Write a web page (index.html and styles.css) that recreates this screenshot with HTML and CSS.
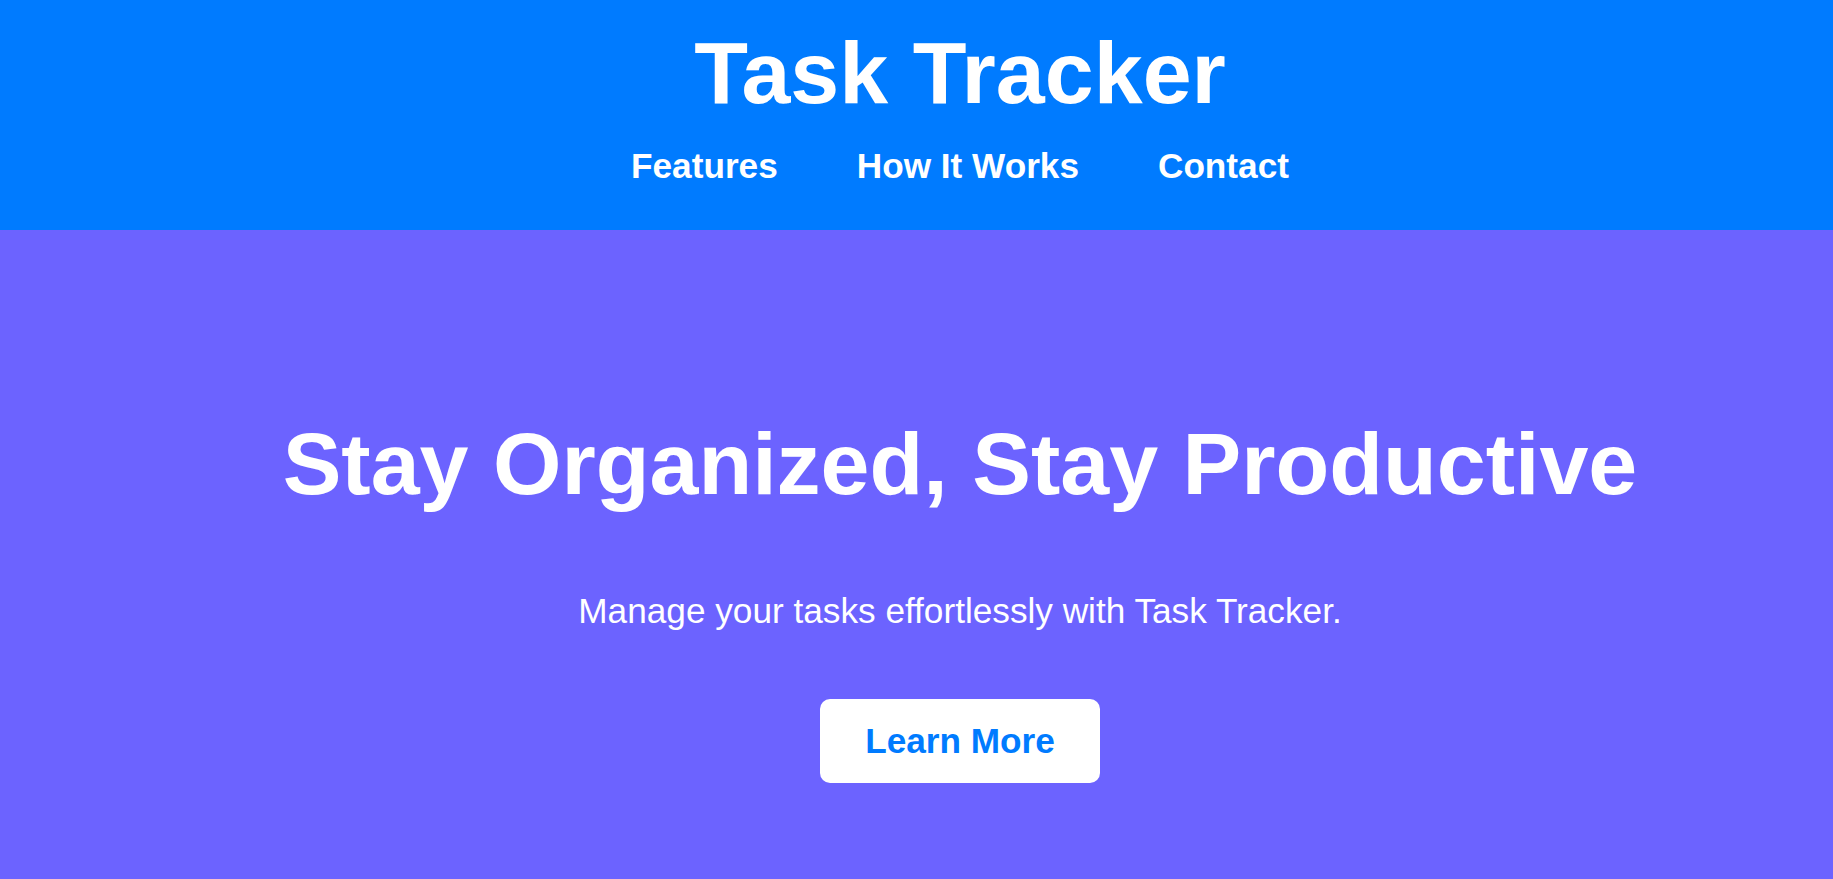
FILE: index.html
```html
<!DOCTYPE html>
<html lang="en">
<head>
<meta charset="utf-8">
<title>Task Tracker</title>
<link rel="stylesheet" href="styles.css">
</head>
<body>
<header class="site-header">
  <h1 class="brand">Task Tracker</h1>
  <nav class="nav">
    <a class="nav-link" href="#features">Features</a>
    <a class="nav-link" href="#how">How It Works</a>
    <a class="nav-link" href="#contact">Contact</a>
  </nav>
</header>
<section class="hero">
  <h2 class="hero-title">Stay Organized, Stay Productive</h2>
  <p class="hero-sub">Manage your tasks effortlessly with Task Tracker.</p>
  <a class="btn" href="#features">Learn More</a>
</section>
</body>
</html>
```

FILE: styles.css
```css
html, body {
  margin: 0;
  padding: 0;
  overflow: hidden;
}
body {
  font-family: "Liberation Sans", Arial, sans-serif;
  color: #fff;
  background: #6c63ff;
}
.site-header {
  background: #007bff;
  height: 230px;
  box-sizing: border-box;
  padding: 22px 0 0 87px;
  text-align: center;
}
.brand {
  margin: 0 0 22px;
  font-size: 88px;
  font-weight: 700;
  line-height: normal;
}
.nav {
  display: flex;
  justify-content: center;
  gap: 79px;
}
.nav-link {
  color: #fff;
  text-decoration: none;
  font-size: 35.2px;
  font-weight: 700;
  line-height: normal;
}
.hero {
  height: 649px;
  box-sizing: border-box;
  padding: 183px 0 0 87px;
  display: flex;
  flex-direction: column;
  align-items: center;
  text-align: center;
}
.hero-title {
  margin: 0;
  font-size: 88px;
  font-weight: 700;
  line-height: normal;
}
.hero-sub {
  margin: 76px 0 0;
  font-size: 35.2px;
  line-height: normal;
}
.btn {
  margin-top: 68px;
  display: inline-block;
  background: #fff;
  color: #007bff;
  text-decoration: none;
  font-size: 35.2px;
  font-weight: 700;
  line-height: normal;
  padding: 22px 45px;
  border-radius: 10px;
}
```
